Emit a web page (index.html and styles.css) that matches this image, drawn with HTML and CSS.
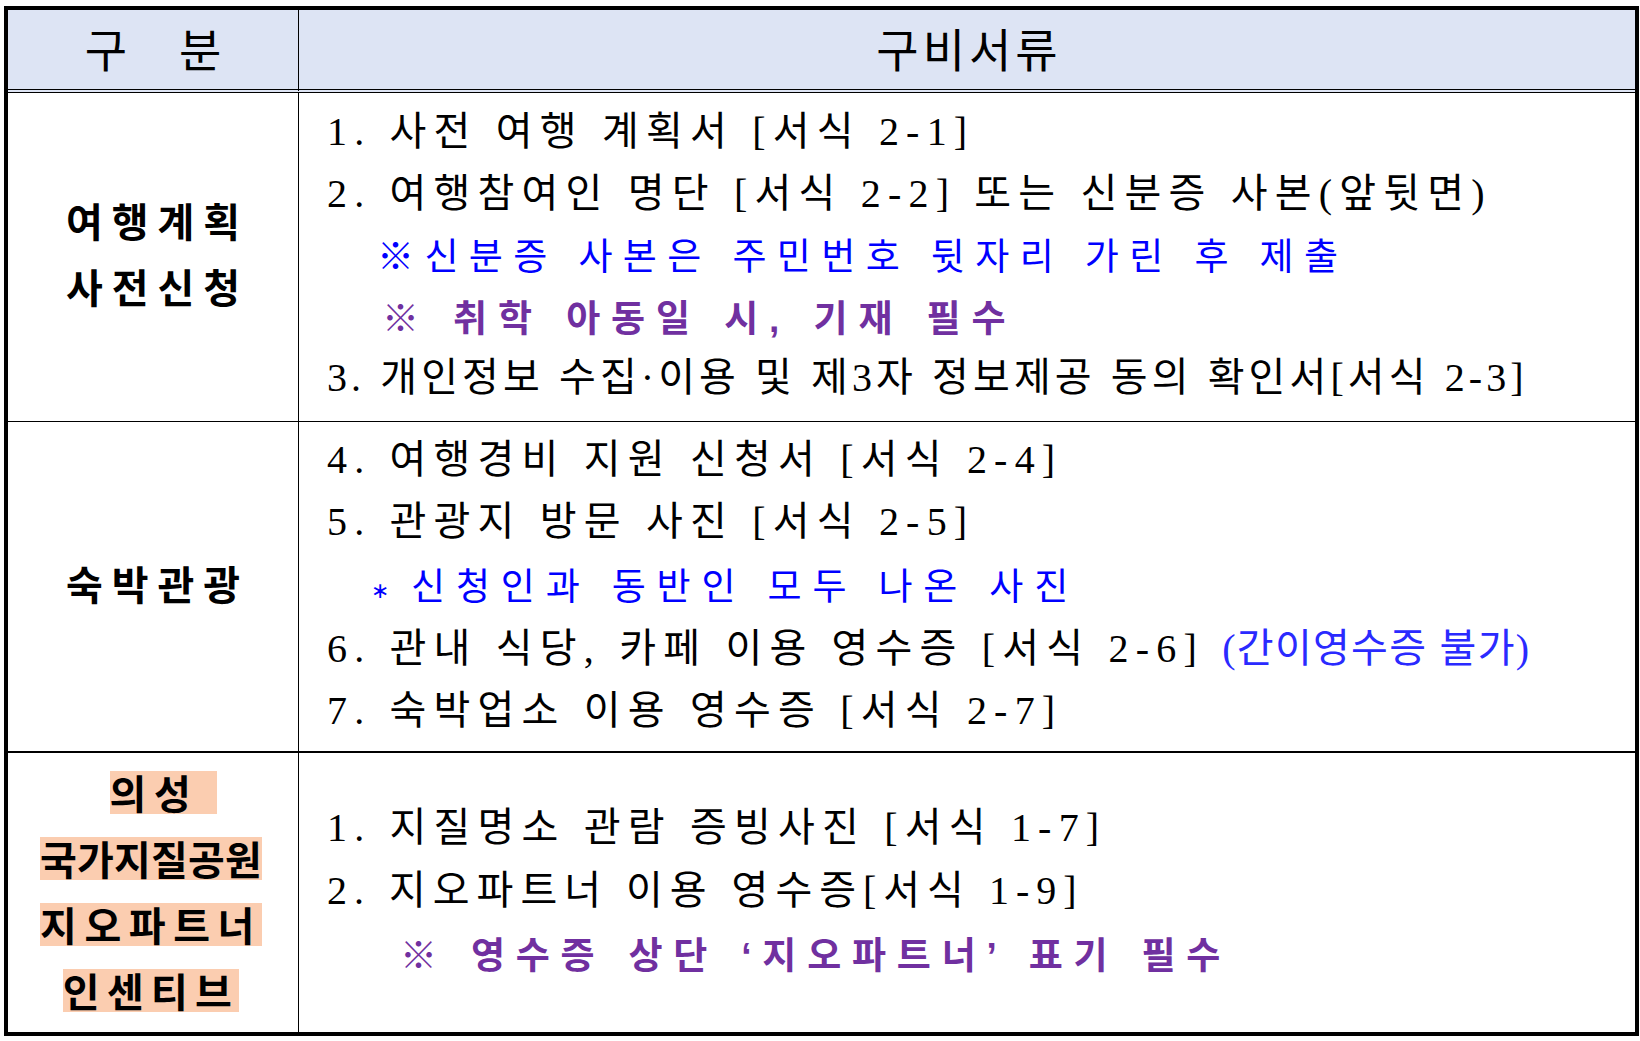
FILE: index.html
```html
<!DOCTYPE html>
<html lang="ko">
<head>
<meta charset="utf-8">
<title>구비서류</title>
<link rel="stylesheet" href="styles.css">
</head>
<body>
<div class="doc">
  <div class="cell head label-col"><span class="head-gubun">구 분</span></div>
  <div class="cell head"><span class="head-docs">구비서류</span></div>

  <div class="cell label-col row1">
    <p class="label">여행계획</p>
    <p class="label">사전신청</p>
  </div>
  <div class="cell content row1">
    <p class="line">1. 사전 여행 계획서 [서식 2-1]</p>
    <p class="line">2. 여행참여인 명단 [서식 2-2] 또는 신분증 사본(앞뒷면)</p>
    <p class="note blue ind-a">※신분증 사본은 주민번호 뒷자리 가린 후 제출</p>
    <p class="note purple ind-b">※ 취학 아동일 시, 기재 필수</p>
    <p class="line tight">3. 개인정보 수집·이용 및 제3자 정보제공 동의 확인서[서식 2-3]</p>
  </div>

  <div class="cell label-col row2">
    <p class="label">숙박관광</p>
  </div>
  <div class="cell content row2">
    <p class="line">4. 여행경비 지원 신청서 [서식 2-4]</p>
    <p class="line">5. 관광지 방문 사진 [서식 2-5]</p>
    <p class="note blue ind-c"><span class="star">∗</span>신청인과 동반인 모두 나온 사진</p>
    <p class="line">6. 관내 식당, 카페 이용 영수증 [서식 2-6] <span class="paren">(간이영수증 불가)</span></p>
    <p class="line">7. 숙박업소 이용 영수증 [서식 2-7]</p>
  </div>

  <div class="cell label-col row3">
    <p class="label hl-line"><span class="hl hl-a">의성</span></p>
    <p class="label hl-line"><span class="hl hl-b">국가지질공원</span></p>
    <p class="label hl-line"><span class="hl hl-c">지오파트너</span></p>
    <p class="label hl-line"><span class="hl hl-d">인센티브</span></p>
  </div>
  <div class="cell content row3">
    <p class="line l3">1. 지질명소 관람 증빙사진 [서식 1-7]</p>
    <p class="line l3 l3-b">2. 지오파트너 이용 영수증[서식 1-9]</p>
    <p class="note purple ind-d l3">※ 영수증 상단 ‘지오파트너’ 표기 필수</p>
  </div>
</div>
</body>
</html>
```

FILE: styles.css
```css
* {
  box-sizing: border-box;
  margin: 0;
  padding: 0;
}

html, body {
  background: #ffffff;
}

body {
  padding: 6px 0 0 4px;
  font-family: "Noto Sans CJK KR", sans-serif;
  color: #000000;
}

.doc {
  width: 1635px;
  height: 1030px;
  border: 4px solid #000000;
  display: grid;
  grid-template-columns: 291px 1fr;
  grid-template-rows: 83px 329px 331px 1fr;
}

.cell {
  border-bottom: 1px solid #000000;
  display: flex;
  flex-direction: column;
  justify-content: center;
}

.label-col {
  border-right: 1px solid #000000;
  align-items: center;
  padding-bottom: 8px;
}

.label-col.row3 {
  padding-bottom: 3px;
}

.head {
  background: #dde4f4;
  border-bottom: 4px double #000000;
  align-items: center;
  padding-bottom: 6px;
}

.row2 {
  border-bottom-width: 2px;
}

.row3 {
  border-bottom: none;
}

.head-gubun,
.head-docs {
  font-size: 46px;
  line-height: 52px;
  font-weight: 400;
  letter-spacing: 7px;
  white-space: nowrap;
}

.head-gubun {
  word-spacing: 25px;
  margin-right: -7px;
}

.head-docs {
  letter-spacing: 4px;
  margin-right: -4px;
}

.label {
  font-size: 40px;
  line-height: 66px;
  font-weight: 700;
  letter-spacing: 9px;
  margin-right: -9px;
  white-space: nowrap;
}

.hl-line {
  height: 66px;
  display: flex;
  align-items: center;
  justify-content: center;
  margin-right: 4px;
}

.hl {
  display: inline-block;
  height: 43px;
  line-height: 43px;
  background: #fbcdb0;
}

.hl-a {
  letter-spacing: 7.6px;
  padding-right: 19px;
  margin-right: -25px;
}

.hl-b {
  letter-spacing: 0.2px;
}

.hl-c {
  letter-spacing: 7.6px;
}

.hl-d {
  letter-spacing: 7.3px;
}

.content {
  padding-left: 28px;
  padding-bottom: 4px;
  align-items: flex-start;
}

.content.row2 {
  padding-bottom: 2px;
}

.line {
  font-family: "Liberation Serif", "Noto Sans CJK KR", serif;
  font-size: 40px;
  line-height: 61.5px;
  font-weight: 400;
  letter-spacing: 7.2px;
  word-spacing: 1px;
  white-space: nowrap;
}

.line.tight {
  letter-spacing: 4.1px;
}

.line.l3 {
  line-height: 63px;
}

.line.l3-b {
  letter-spacing: 7px;
}

.row2 .line {
  line-height: 62px;
}

.paren {
  color: #2a2aff;
  letter-spacing: 1.3px;
}

.note {
  font-family: "Liberation Sans", "Noto Sans CJK KR", sans-serif;
  font-size: 37px;
  padding-top: 7px;
  line-height: 54.5px;
  letter-spacing: 10.4px;
  white-space: nowrap;
}

.row2 .note {
  line-height: 55px;
}

.note.l3 {
  line-height: 56px;
}

.blue {
  color: #0000ff;
  font-weight: 400;
}

.purple {
  color: #7030a0;
  font-weight: 700;
  letter-spacing: 10.9px;
  word-spacing: 2px;
}

.ind-a {
  margin-left: 50px;
}

.ind-b {
  margin-left: 55px;
}

.ind-c {
  margin-left: 44px;
  letter-spacing: 10.85px;
}

.ind-d {
  margin-left: 73px;
  letter-spacing: 10.8px;
}

.star {
  display: inline-block;
  width: 40px;
  font-family: "DejaVu Sans", sans-serif;
  font-size: 22px;
  letter-spacing: 0;
  vertical-align: 2px;
}
```
